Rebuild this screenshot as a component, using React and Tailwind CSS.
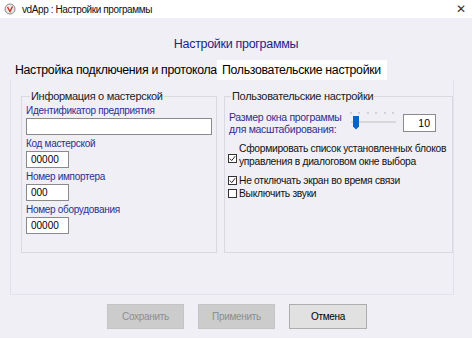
import React from "react";

const font = { fontFamily: '"Liberation Sans", Arial, sans-serif' };

function Check({ checked, className = "" }) {
  return (
    <span className={`w-[9px] h-[9px] shrink-0 border border-[#333] bg-white flex items-center justify-center ${className}`}>
      {checked && (
        <svg width="7" height="7" viewBox="0 0 7 7">
          <path d="M0.8 3.6 L2.7 5.6 L6.2 1.2" fill="none" stroke="#222" strokeWidth="1" />
        </svg>
      )}
    </span>
  );
}

function Field({ label, value, wide, first }) {
  return (
    <div className={first ? "" : "mt-[2px]"}>
      <div className="text-[10px] leading-[13px] tracking-[-0.3px] text-[#2e2e95]">{label}</div>
      <div
        className={`mt-[1px] h-[17px] border border-[#8a8a8a] bg-white text-[10px] leading-[15px] pl-[4px] text-black ${
          wide ? "w-[186px]" : "w-[43px]"
        }`}
      >
        {value}
      </div>
    </div>
  );
}

export default function App() {
  return (
    <div className="w-[474px] h-[340px] bg-white relative overflow-hidden" style={font}>
      {/* title bar */}
      <div className="h-[18px] flex items-center pl-[4px] pr-[8px] bg-white">
        <svg width="12" height="12" viewBox="0 0 12 12" className="shrink-0">
          <circle cx="6" cy="6" r="5" fill="#e9e9e9" stroke="#888" strokeWidth="1" />
          <path d="M3.5 4 L6 8.5 L8.5 3.5" fill="none" stroke="#c0392b" strokeWidth="1.4" />
        </svg>
        <span className="ml-[6px] text-[10px] tracking-[-0.4px] text-[#111]">vdApp : Настройки программы</span>
        <span className="ml-auto text-[12px] leading-none text-[#333] font-light">✕</span>
      </div>

      {/* body */}
      <div className="w-[472px] h-[320px] bg-[#efeff5] flex flex-col">
        <div className="pt-[18px] text-center text-[12.5px] leading-[16px] tracking-[-0.3px] text-[#1e1e8c]">
          Настройки программы
        </div>

        {/* tabs */}
        <div className="mt-[8px] h-[20px] flex items-stretch">
          <div className="w-[217px] pl-[15px] text-[12.3px] leading-[20px] tracking-[-0.3px] text-black whitespace-nowrap">
            Настройка подключения и протокола
          </div>
          <div className="w-[170px] bg-white text-[12.3px] leading-[20px] tracking-[-0.3px] text-black pl-[5px] whitespace-nowrap">
            Пользовательские настройки
          </div>
        </div>

        {/* tab panel */}
        <div className="ml-[10px] w-[444px] h-[215px] border-x border-b border-[#e2e2ea] flex gap-[7px] pl-[10px] pt-[10px]">
          {/* left group */}
          <fieldset className="w-[196px] h-[163px] border border-[#d9d9df] px-[4px]">
            <legend className="ml-[4px] px-[1px] text-[11px] leading-[13px] tracking-[-0.3px] text-[#222]">
              Информация о мастерской
            </legend>
            <div className="pt-[1px]">
              <Field first label="Идентификатор предприятия" value="" wide />
              <Field label="Код мастерской" value="00000" />
              <Field label="Номер импортера" value="000" />
              <Field label="Номер оборудования" value="00000" />
            </div>
          </fieldset>

          {/* right group */}
          <fieldset className="w-[226px] h-[163px] border border-[#d9d9df] pl-[4px] pr-[6px]">
            <legend className="ml-[2px] px-[1px] text-[11px] leading-[13px] tracking-[-0.3px] text-[#222]">
              Пользовательские настройки
            </legend>
            <div className="mt-[8px] flex items-center">
              <div className="text-[10.5px] leading-[12px] tracking-[-0.3px] text-[#2e2e95] w-[118px] shrink-0">
                Размер окна программы
                <br />
                для масштабирования:
              </div>
              <svg width="52" height="24" viewBox="0 0 52 24" className="shrink-0">
                {[4, 12, 21, 29, 38, 46].map((x) => (
                  <line key={x} x1={x} y1="1" x2={x} y2="3" stroke="#b5b5b5" strokeWidth="1" />
                ))}
                <rect x="4" y="10" width="45" height="2" fill="#d8d8d8" />
                <path d="M6 5 H12 V15.5 L9 18.5 L6 15.5 Z" fill="#0a64c8" />
              </svg>
              <div className="ml-[4px] w-[33px] h-[18px] border border-[#8a8a8a] bg-white text-[10.5px] leading-[16px] text-right pr-[5px] text-black">
                10
              </div>
            </div>

            <div className="mt-[7px] flex items-center -ml-[1px]">
              <Check checked className="mt-[6px]" />
              <div className="ml-[2px] text-[10.3px] leading-[13px] tracking-[-0.3px] text-[#111] whitespace-nowrap">
                Сформировать список установленных блоков
                <br />
                управления в диалоговом окне выбора
              </div>
            </div>
            <div className="mt-[6px] flex items-center -ml-[1px]">
              <Check checked />
              <div className="ml-[2px] text-[10.3px] leading-[13px] tracking-[-0.3px] text-[#111]">
                Не отключать экран во время связи
              </div>
            </div>
            <div className="mt-[0px] flex items-center -ml-[1px]">
              <Check />
              <div className="ml-[2px] text-[10.3px] leading-[13px] tracking-[-0.3px] text-[#111]">
                Выключить звуки
              </div>
            </div>
          </fieldset>
        </div>

        {/* buttons */}
        <div className="mt-[9px] flex pl-[107px] gap-[14px]">
          <div className="w-[77px] h-[25px] bg-[#cccccc] border border-[#c4c4c4] text-[10px] leading-[23px] tracking-[-0.3px] text-center text-[#8e8e8e]">
            Сохранить
          </div>
          <div className="w-[77px] h-[25px] bg-[#cccccc] border border-[#c4c4c4] text-[10px] leading-[23px] tracking-[-0.3px] text-center text-[#8e8e8e]">
            Применить
          </div>
          <div className="w-[78px] h-[25px] bg-[#e1e1e1] border border-[#adadad] text-[10px] leading-[23px] tracking-[-0.3px] text-center text-black">
            Отмена
          </div>
        </div>
      </div>
    </div>
  );
}
